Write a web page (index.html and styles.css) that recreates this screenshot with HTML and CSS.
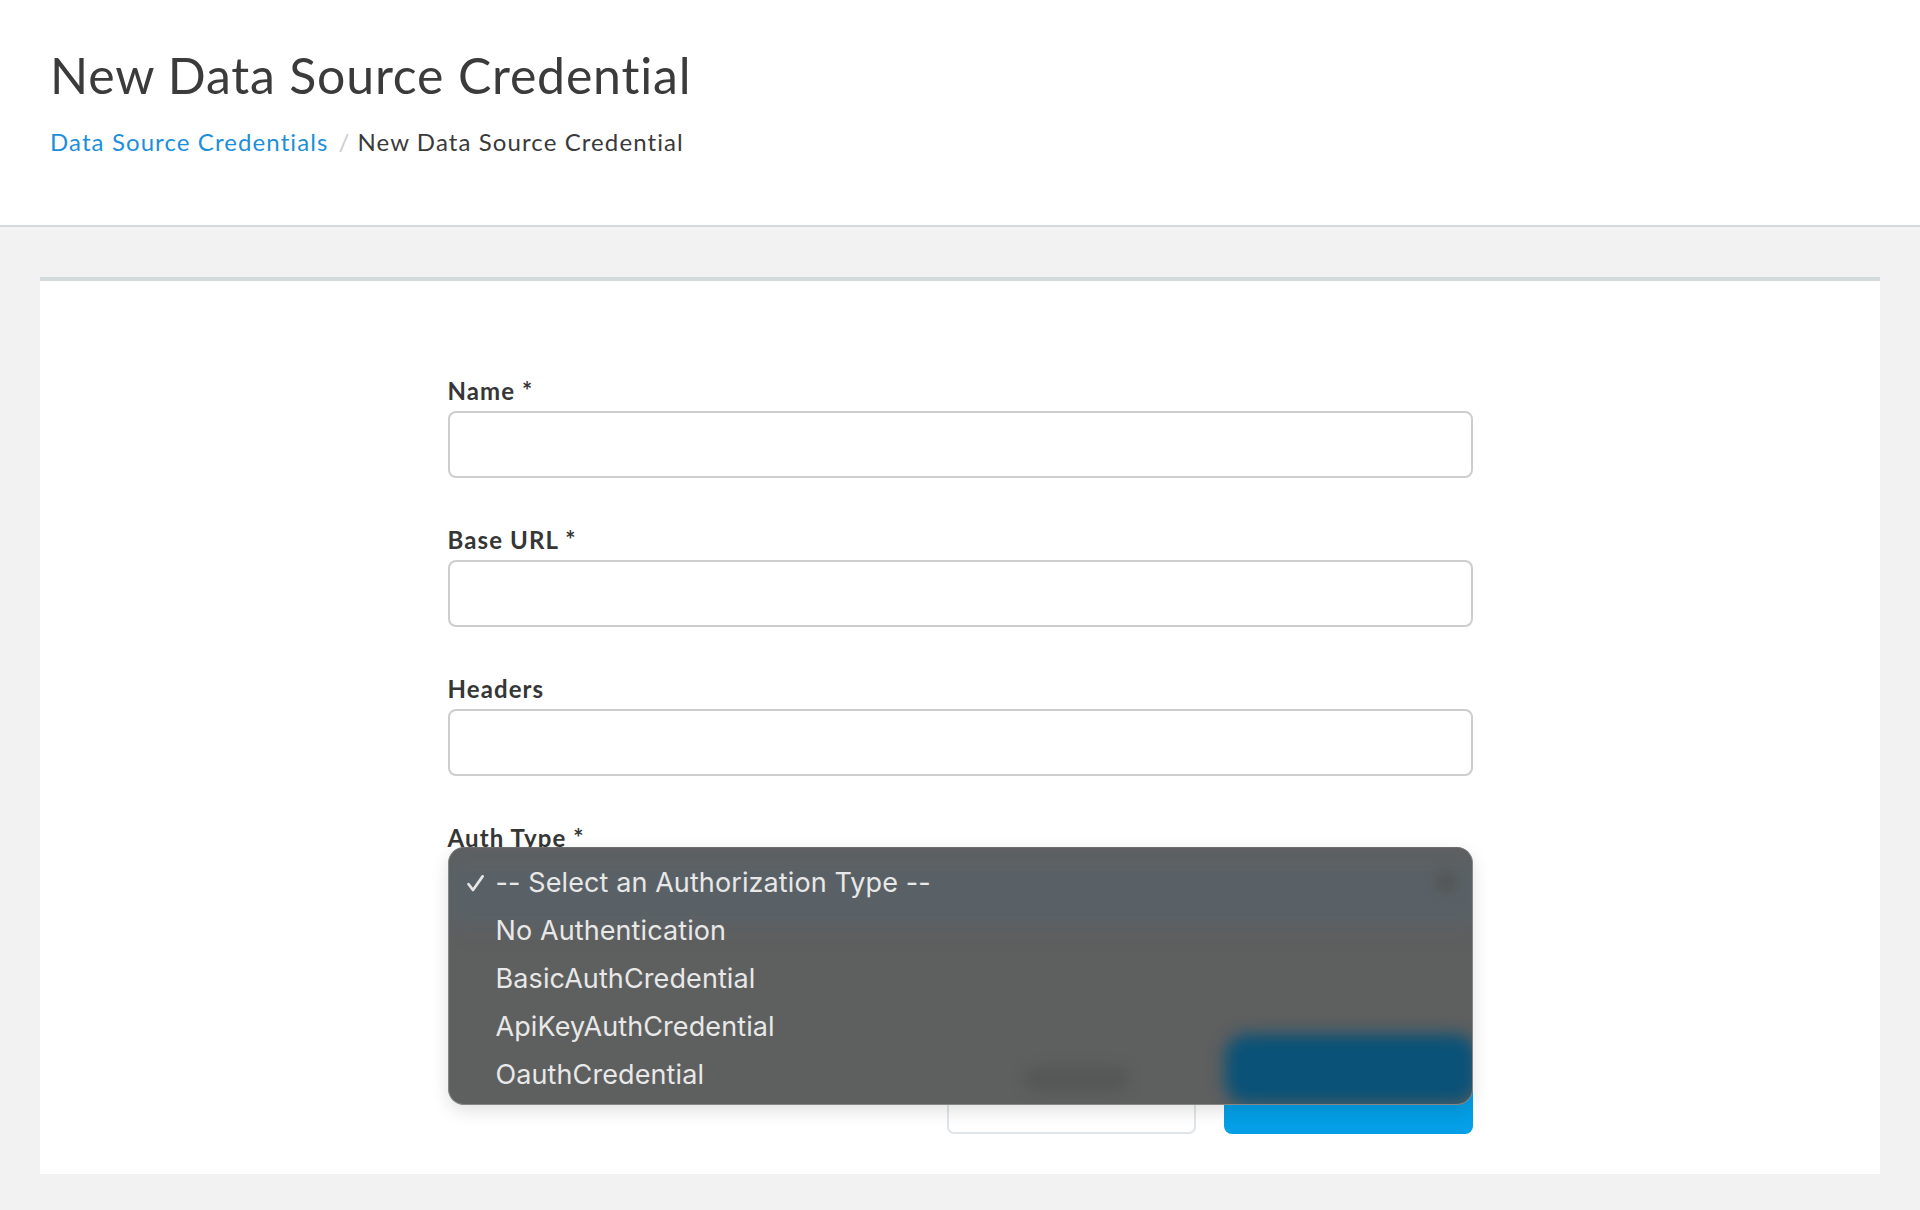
FILE: index.html
```html
<!DOCTYPE html>
<html lang="en">
<head>
<meta charset="utf-8">
<title>New Data Source Credential</title>
<link rel="stylesheet" href="styles.css">
</head>
<body>
<header class="page-header">
  <h1 class="title">New Data Source Credential</h1>
  <nav class="crumbs">
    <a class="crumb-link" href="#">Data Source Credentials</a>
    <span class="sep">/</span>
    <span class="crumb-current">New Data Source Credential</span>
  </nav>
</header>
<main class="main">
  <section class="card">
    <form class="form">
      <div class="field">
        <label class="label">Name *</label>
        <input class="input" type="text">
      </div>
      <div class="field">
        <label class="label">Base URL *</label>
        <input class="input" type="text">
      </div>
      <div class="field">
        <label class="label">Headers</label>
        <input class="input" type="text">
      </div>
      <div class="field field-last">
        <label class="label">Auth Type *</label>
        <div class="select"></div>
        <div class="menu">
          <div class="menu-bg">
            <div class="ghost-select"></div>
            <div class="ghost-chev"></div>
            <div class="ghost-cancel"></div>
            <div class="ghost-save"></div>
          </div>
          <ul class="menu-list">
            <li class="menu-item selected">
              <svg class="check" viewBox="0 0 17 17" width="17" height="17"><path d="M1.6 9.2 L6 15 L15.6 1.4" fill="none" stroke="#e6e6e6" stroke-width="2.7" stroke-linecap="round" stroke-linejoin="round"/></svg>
              -- Select an Authorization Type --
            </li>
            <li class="menu-item">No Authentication</li>
            <li class="menu-item">BasicAuthCredential</li>
            <li class="menu-item">ApiKeyAuthCredential</li>
            <li class="menu-item">OauthCredential</li>
          </ul>
        </div>
      </div>
      <div class="actions">
        <button type="button" class="btn btn-cancel">Cancel</button>
        <button type="button" class="btn btn-save">Save</button>
      </div>
    </form>
  </section>
</main>
</body>
</html>
```
FILE: styles.css
```css
html, body {
  margin: 0;
  padding: 0;
}
body {
  background: #f2f2f2;
  font-family: Lato, "Open Sans", sans-serif;
  color: #3a3a3a;
  width: 1920px;
  height: 1210px;
  overflow: hidden;
}
.page-header {
  background: #ffffff;
  padding: 45px 50px 69px;
  border-bottom: 2px solid #d5d9dc;
}
.title {
  margin: 0;
  font-size: 50px;
  font-weight: 400;
  line-height: 60px;
  letter-spacing: 0.8px;
  color: #3b3b3b;
}
.crumbs {
  margin-top: 22px;
  font-size: 24px;
  line-height: 29px;
  letter-spacing: 1.1px;
  display: flex;
  align-items: baseline;
}
.crumb-link {
  color: #1d8fd9;
  text-decoration: none;
}
.sep {
  color: #cccccc;
  margin: 0 7px 0 10px;
}
.crumb-current {
  color: #3a3a3a;
}
.main {
  padding: 50px 40px 36px;
}
.card {
  background: #ffffff;
  border-top: 4px solid #d4d9dc;
  padding: 95px 0 40px;
}
.form {
  width: 1025px;
  margin: 0 auto;
}
.field {
  display: flex;
  flex-direction: column;
  gap: 6px;
  margin-bottom: 47px;
  position: relative;
}
.field-last {
  margin-bottom: 0;
}
.label {
  font-size: 24px;
  line-height: 29px;
  font-weight: 700;
  letter-spacing: 1.1px;
  color: #363636;
}
.input {
  height: 67px;
  box-sizing: border-box;
  border: 2px solid #cdcdcd;
  border-radius: 8px;
  background: #fff;
  margin: 0;
  padding: 0 16px;
  font: inherit;
}
.select {
  height: 67px;
  box-sizing: border-box;
  border: 2px solid #1d8fd9;
  border-radius: 8px;
  background: #fff;
}
.menu {
  position: absolute;
  left: 0;
  top: 24px;
  width: 1025px;
  height: 258px;
  box-sizing: border-box;
  border-radius: 16px;
  border: 1px solid #858686;
  border-top-color: #6c6d6d;
  overflow: hidden;
  background: #5e5f5f;
  box-shadow: 0 6px 18px rgba(0,0,0,0.12);
}
.menu-bg {
  position: absolute;
  inset: 0;
}
.ghost-select {
  position: absolute;
  left: -6px;
  top: 10px;
  width: 1040px;
  height: 70px;
  border-radius: 10px;
  background: #5a6166;
  filter: blur(9px);
}
.ghost-chev {
  position: absolute;
  left: 985px;
  top: 22px;
  width: 24px;
  height: 24px;
  border-radius: 50%;
  background: #555858;
  filter: blur(5px);
}
.ghost-cancel {
  position: absolute;
  left: 575px;
  top: 218px;
  width: 105px;
  height: 26px;
  border-radius: 13px;
  background: #565858;
  filter: blur(6px);
}
.ghost-save {
  position: absolute;
  left: 776px;
  top: 186px;
  width: 252px;
  height: 70px;
  border-radius: 22px;
  background: #0a5277;
  filter: blur(8px);
}
.menu-list {
  position: relative;
  list-style: none;
  margin: 0;
  padding: 11px 0 0;
}
.menu-item {
  position: relative;
  font-family: Inter, "Liberation Sans", sans-serif;
  font-size: 27px;
  line-height: 48px;
  letter-spacing: 0.1px;
  color: #e8e8e8;
  padding-left: 47px;
  white-space: nowrap;
}
.check {
  position: absolute;
  left: 18px;
  top: 16px;
}
.actions {
  display: flex;
  justify-content: flex-end;
  gap: 28px;
  margin-top: 112px;
}
.btn {
  height: 97px;
  box-sizing: border-box;
  font-family: Lato, sans-serif;
  font-size: 24px;
  font-weight: 700;
  margin: 0;
}
.btn-cancel {
  width: 249px;
  background: #ffffff;
  border: 2px solid #e0e5e9;
  border-radius: 7px;
  color: #555;
}
.btn-save {
  width: 249px;
  background: #049fe6;
  border: none;
  border-radius: 8px;
  color: #fff;
}
```
